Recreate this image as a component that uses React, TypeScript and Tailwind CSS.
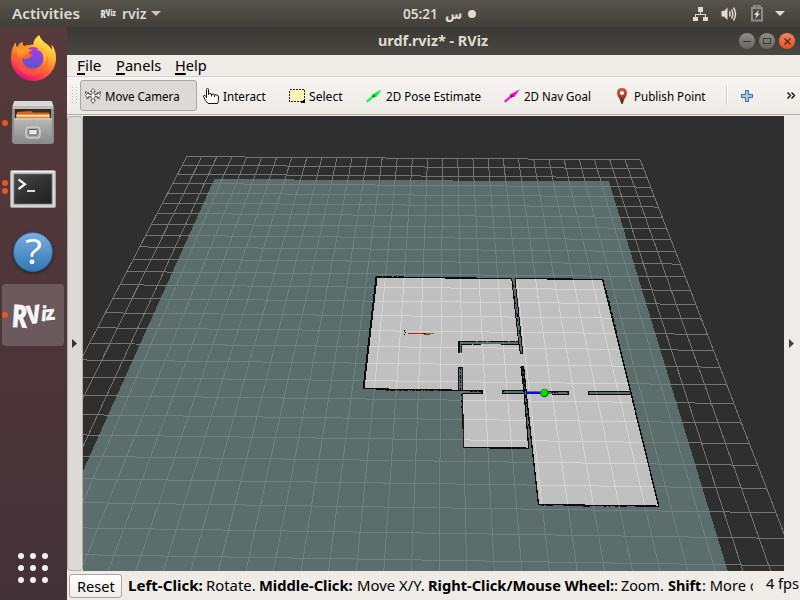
import { useLayoutEffect, useRef, useState } from "react";
import type { ReactNode } from "react";

/* Text run condensed or widened horizontally to a fixed measure. */
function Fit({ w, className = "", children }: { w: number; className?: string; children: ReactNode }) {
  const ref = useRef<HTMLSpanElement>(null);
  const [scale, setScale] = useState(1);
  useLayoutEffect(() => {
    if (ref.current) setScale(w / ref.current.offsetWidth);
  }, [w]);
  return (
    <span className={`inline-flex shrink-0 whitespace-pre ${className}`} style={{ width: w }}>
      <span ref={ref} className="inline-block origin-left" style={{ transform: `scaleX(${scale})` }}>
        {children}
      </span>
    </span>
  );
}

/* ---------- 3D view ---------- */

type Pt = [number, number];

/* Projective mapping of the unit square onto a quad: (0,0) (1,0) (1,1) (0,1). */
function project(q: Pt[]) {
  const [[x0, y0], [x1, y1], [x2, y2], [x3, y3]] = q;
  const dx1 = x1 - x2, dx2 = x3 - x2, sx = x0 - x1 + x2 - x3;
  const dy1 = y1 - y2, dy2 = y3 - y2, sy = y0 - y1 + y2 - y3;
  const det = dx1 * dy2 - dx2 * dy1;
  const g = (sx * dy2 - dx2 * sy) / det;
  const h = (dx1 * sy - sx * dy1) / det;
  const a = x1 - x0 + g * x1, b = x3 - x0 + h * x3;
  const d = y1 - y0 + g * y1, e = y3 - y0 + h * y3;
  return (u: number, v: number): Pt => {
    const w = g * u + h * v + 1;
    return [(a * u + b * v + x0) / w, (d * u + e * v + y0) / w];
  };
}

const at = project([[186.8, 156.6], [640.2, 159.8], [713.5, 350.4], [89.3, 343.5]]);

function gridPath() {
  let d = "";
  for (let i = 0; i <= 30; i++) {
    const a = at(i / 30, 0), b = at(i / 30, 28 / 16);
    d += `M${a[0].toFixed(2)} ${a[1].toFixed(2)}L${b[0].toFixed(2)} ${b[1].toFixed(2)}`;
  }
  for (let j = 0; j <= 28; j++) {
    const a = at(0, j / 16), b = at(1, j / 16);
    d += `M${a[0].toFixed(2)} ${a[1].toFixed(2)}L${b[0].toFixed(2)} ${b[1].toFixed(2)}`;
  }
  return d;
}

function Scene() {
  return (
    <svg width="701" height="455" viewBox="83 116 701 455" className="block bg-[#2f2f2f]" shapeRendering="crispEdges" fill="none">
      <path d={gridPath()} stroke="#747474" strokeWidth="1" />
      <g opacity="0.7">
        <path d="M214.3 179L609 181.5L728 572L37.5 572Z" fill="#6f8985" />
        <path d="M376.5 277L603 279L631.5 393L659 506L538.5 504.5L532 449L463.5 447L462.5 390L363.5 388.5Z" fill="#fefefe" />
        {/* wall bodies */}
        <g fill="#6f8985">
          <path d="M511.7 278L515 278L523 353L520 353L518.5 341Z" />
          <path d="M458 341H519.5V344H458Z" />
          <path d="M458 341H462V352H458Z" />
          <path d="M458 367H462V391H458Z" />
          <path d="M458 390H483V393.5H458Z" />
          <path d="M502 390.5H569V394H502Z" />
          <path d="M588 391.5H632V394.5H588Z" />
          <path d="M520.5 367H524L526.8 395L533 450H529L523.5 390Z" />
        </g>
        {/* scanned wall outlines */}
        <g stroke="#000">
          <path d="M376.5 277L363.5 388.5" strokeWidth="2" />
          <path d="M376 277.2L512 278.5M515 278.5L603 279.5" strokeWidth="1.3" />
          <path d="M376 276.3L404 276.6" strokeDasharray="6 1 9 2 3 1" />
          <path d="M470 278.8H512M575 279.8H603" />
          <path d="M602.7 279.5L631 393L658.7 506" strokeWidth="1.4" />
          <path d="M606 290L616.5 332M631.3 395L641 434" strokeDasharray="2 3 3 4" strokeWidth="1.4" />
          <path d="M659 506.2L538.5 504.5L532.5 451L526.6 396" strokeWidth="1.3" />
          <path d="M541 505.5L658 507" strokeDasharray="3 2 7 14 2 3 1 5" />
          <path d="M363 388.7L458 390.2" strokeWidth="1.2" />
          <path d="M386 390.3L452 391" strokeDasharray="3 1 5 2 1 1" />
          <path d="M511.7 278L518.5 341L520.3 353H522.5L521.8 343L515 279" />
          <path d="M513 285L520.5 340" strokeDasharray="2 3 1 5 4 2" />
          <path d="M457.5 341.5H519" strokeDasharray="18 2 5 1 2 2 1 1" />
          <path d="M462 344.5H520" strokeDasharray="10 1 8 20 20 1" />
          <path d="M459 341V352.5M461.5 344V352.5" strokeWidth="1.5" />
          <path d="M458.5 367V390M462 367V390" />
          <path d="M460.5 367V390" strokeDasharray="3 2 1 2 4 1" />
          <path d="M458 367.5H462" />
          <path d="M456 390.4H482.5V393.3H462" />
          <path d="M481.5 390V394" strokeWidth="2" />
          <path d="M470 391.5H483" strokeDasharray="3 1" />
          <path d="M526 390.7H502V393.8H525" />
          <path d="M502.7 390V394" strokeWidth="2" strokeDasharray="2 1" />
          <path d="M548 391.2H568.5V394.2H552" />
          <path d="M567.7 391V395M551 392H558" strokeWidth="2" strokeDasharray="2 1" />
          <path d="M631 391.8H588.5V394.4H631" />
          <path d="M520.6 367H523.7L526.5 395M521 367L524 391L528.7 448" strokeWidth="1.2" />
          <path d="M522.4 367L524.5 391" strokeWidth="2" strokeDasharray="5 1 3 2" />
          <path d="M526 395L529.5 428" strokeWidth="1.6" strokeDasharray="4 3 2 2" />
          <path d="M462.5 394L463.5 447" strokeWidth="1.3" />
          <path d="M461.5 394V412" strokeDasharray="2 4" />
          <path d="M463.5 447.2L500 447.5L529 448.3" strokeWidth="1.4" />
          <path d="M490 448.6H529" strokeDasharray="24 1" />
          <path d="M404.5 330V332M404.5 333.5V335M405.5 332V333" />
        </g>
      </g>
      <path d="M408 333.5H424" stroke="#dc1c00" />
      <path d="M423 333.5H426M424 334.5H427" stroke="#4a1a08" />
      <path d="M424 334.5H430" stroke="#e01800" />
      <path d="M426 333.5H434" stroke="#5a8a10" />
      <path d="M526 393H541" stroke="#0808f5" strokeWidth="2" />
      <g shapeRendering="auto">
        <circle cx="544.5" cy="393" r="4.3" fill="#087a08" />
        <circle cx="544.3" cy="392.6" r="3.4" fill="#07da0b" />
      </g>
    </svg>
  );
}

/* ---------- dock icons ---------- */

function Firefox() {
  return (
    <svg width="46" height="48" viewBox="10 34 46 48" className="-mt-0.5">
      <defs>
        <linearGradient id="fxBody" x1="0.8" y1="0.05" x2="0.35" y2="1">
          <stop offset="0" stopColor="#fff44f" />
          <stop offset="0.35" stopColor="#ffb22e" />
          <stop offset="0.62" stopColor="#ff6a35" />
          <stop offset="0.85" stopColor="#f9305a" />
          <stop offset="1" stopColor="#d80f7c" />
        </linearGradient>
        <linearGradient id="fxGlobe" x1="0.6" y1="0" x2="0.4" y2="1">
          <stop offset="0" stopColor="#b833e1" />
          <stop offset="0.5" stopColor="#7a4be0" />
          <stop offset="1" stopColor="#5a55c8" />
        </linearGradient>
        <linearGradient id="fxHead" x1="0" y1="0" x2="0.5" y2="1">
          <stop offset="0" stopColor="#ff8a2a" />
          <stop offset="0.6" stopColor="#ff9c22" />
          <stop offset="1" stopColor="#ff5b30" />
        </linearGradient>
      </defs>
      <path d="M39.3 35C35.5 37.2 33.5 41 33 45C29.5 44.5 26.5 45.4 24.3 46.6C23 45.5 22.3 43.8 22.2 42C19.5 43.2 18 45.5 17.3 47.6C16 46.2 15.6 44 15.7 42.3C13 45.5 11 51.5 11 58C11 71 21 81 33.3 81C46 81 56 71 56 57.5C56 52 54 47 51.3 44.2C51.9 46 52.2 48 52 49.6C48 43 41.5 42.5 39.3 35Z" fill="url(#fxBody)" />
      <circle cx="32.8" cy="57.8" r="10.8" fill="url(#fxGlobe)" />
      <path d="M33 45C30 44.4 26.5 45.3 24.3 46.6C23 45.5 22.3 43.8 22.2 42C18.5 44 17.2 48 17.1 50.5C16.8 55 19 57 22.7 58.6C27 60.3 31 57 32.7 55.4C33.4 54 31.2 54 28.8 53.7C28.6 52 31 51 33 50.3C32 49.5 29 49.2 28 49.3C29.3 47.3 31 46 33 45Z" fill="url(#fxHead)" />
      <path d="M36 49.3C42 50.5 44.8 56 43.4 61.2C47 57 46.8 51 42.4 47.6Z" fill="#ffb434" />
      <path d="M17.1 50C15 63 25 71.5 34.5 70.5C44 69.7 48.3 61 47 54C51 65 43.5 75 33 75.3C22 75.6 14 67 17.1 50Z" fill="#ff6238" opacity="0.55" />
    </svg>
  );
}

function Files() {
  return (
    <svg width="46" height="46" viewBox="10 100 46 46">
      <defs>
        <linearGradient id="fl" x1="0" y1="0" x2="0" y2="1">
          <stop offset="0" stopColor="#b9b9b7" />
          <stop offset="1" stopColor="#898987" />
        </linearGradient>
      </defs>
      <path d="M14 101H52L54 107V141Q54 144 51 144H15Q12 144 12 141V107Z" fill="#8d8d8b" />
      <path d="M14.5 101H51.5L53.5 106.5H12.5Z" fill="#d9d9d7" />
      <path d="M13 106.5H53V109H13Z" fill="#bdbdbb" />
      <path d="M15 109H51V120H15Z" fill="#3a2a1e" />
      <path d="M17 112L31 111L33 112.5H49V119H17Z" fill="#d2691e" />
      <path d="M16 114H50V120H16Z" fill="#e88a33" />
      <path d="M17 115H49V116.5H17Z" fill="#fbe9c8" />
      <path d="M14 118.5H52V143.5H14Z" fill="url(#fl)" />
      <path d="M14 118.5H52V119.5H14Z" fill="#d8d8d6" />
      <rect x="26" y="127" width="14" height="11" rx="2.5" fill="#a9a9a7" stroke="#e0e0de" />
      <rect x="28.7" y="129.5" width="8.6" height="5.5" rx="1" fill="#e8e8e6" stroke="#555" />
    </svg>
  );
}

function Terminal() {
  return (
    <svg width="46" height="40" viewBox="10 169 46 40">
      <defs>
        <linearGradient id="tm" x1="0" y1="0" x2="1" y2="1">
          <stop offset="0" stopColor="#4b4b4b" />
          <stop offset="0.5" stopColor="#323232" />
          <stop offset="1" stopColor="#202020" />
        </linearGradient>
      </defs>
      <rect x="10.5" y="170.5" width="45" height="37" rx="1.5" fill="#d4d4d2" stroke="#a5a4a2" />
      <path d="M11.5 171.5H54.5" stroke="#f6f6f6" />
      <rect x="14" y="174" width="38" height="30" fill="url(#tm)" stroke="#777" strokeWidth="0.8" />
      <path d="M18.5 179.5L25 184.2L18.5 189" fill="none" stroke="#f3f3f3" strokeWidth="2.2" />
      <path d="M27 191H35" stroke="#f3f3f3" strokeWidth="1.8" />
    </svg>
  );
}

function Help() {
  return (
    <div className="flex h-10 w-10 items-center justify-center rounded-full border border-[#28659f] bg-linear-to-b from-[#78aee0] to-[#2f79b4] font-['Open_Sans',sans-serif] text-[34px] leading-none font-medium text-white shadow-[0_1px_3px_rgba(0,0,0,.5)]">
      <span className="-mt-0.5 scale-x-115">?</span>
    </div>
  );
}

function RvizLogo() {
  return (
    <svg width="50" height="36" viewBox="0 0 50 36" className="overflow-visible">
      {[1, 0].map((s) => (
        <g key={s} transform={`translate(${s} ${s})`} fill={s ? "#5e5557" : "#f4f4f4"} fontFamily="'Open Sans', sans-serif" fontWeight="800">
          <text transform="translate(3 30) rotate(4) scale(.74 1)" fontSize="32">R</text>
          <text transform="translate(19.5 27.5) rotate(-7) scale(.8 1)" fontSize="26">V</text>
          <text transform="translate(32.5 24) rotate(5) scale(.85 1)" fontSize="21">i</text>
          <text transform="translate(37.5 23.5) rotate(-5) scale(1 1)" fontSize="20">z</text>
        </g>
      ))}
    </svg>
  );
}

function DockItem({ dots = 0, active = false, children }: { dots?: number; active?: boolean; children: ReactNode }) {
  return (
    <div className={`relative flex h-[62px] w-[62px] items-center justify-center rounded-[4px] ${active ? "bg-[#6c595e]" : ""}`}>
      {children}
      <div className="absolute inset-y-0 left-0 flex flex-col items-center justify-center gap-[2px]">
        {Array.from({ length: dots }, (_, i) => (
          <span key={i} className="h-1.5 w-1.5 rounded-full bg-[#e95420]" />
        ))}
      </div>
    </div>
  );
}

/* ---------- toolbar ---------- */

function ArrowIcon({ color, dark }: { color: string; dark: string }) {
  return (
    <svg width="16" height="16" viewBox="0 0 16 16" className="-ml-px">
      <path d="M0 13L6 8L5.500 6.700L15.800 1.200L10 9.500L8.500 8.800L1.500 14.500Z" fill={color} />
      <path d="M6 8.200L8.500 6.500L9.500 8L7.500 9.500Z" fill={dark} />
    </svg>
  );
}

const icons = {
  move: (
    <svg width="16" height="16" viewBox="0 0 16 16" fill="#f4f4f4" stroke="#4a4a4a" strokeWidth="0.8">
      <path d="M8 .5L10.5 3.5H9V6L10 6.5L12.5 6V4.5L15.6 7.5L13 10.5V9L10 8.5L9 10V12H10.5L8 15.5L5.5 12H7V10L6 8.5L3 9V10.5L.4 7.5L3.5 4.5V6L6 6.5L7 6V3.5H5.500Z" />
      <path d="M.5 3.500L6 7M15.500 3.500L10 7M1 11L6 8M15 11L10 8M.5 3.500V6M15.500 3.500V6" />
    </svg>
  ),
  hand: (
    <svg width="16" height="16" viewBox="0 0 16 16" fill="#fff" stroke="#111" strokeWidth="1">
      <path d="M3.500 10V1.500Q3.500 .5 4.500 .5Q5.500 .5 5.500 1.500V6.500Q6 5.500 7 5.500Q8.500 5.500 8.500 7Q9 6 10 6Q11.500 6 11.500 7.500Q12 6.500 13 6.800Q15.500 7 15.500 9V12.500L14.500 15.500H5L2.500 12.500L.5 8.500Q0.500 7 2 7.500L3.500 9" />
      <path d="M8.500 6V8.500M11.500 7V9" />
    </svg>
  ),
  select: (
    <svg width="16" height="14" viewBox="0 0 16 14" shapeRendering="crispEdges">
      <rect x="0.5" y="0.5" width="15" height="12" fill="#fbf3b4" stroke="#222" strokeDasharray="2 1" />
      <path d="M12 13.500L16 10V14H12Z" fill="#000" />
    </svg>
  ),
  pose: <ArrowIcon color="#0bf53a" dark="#087a20" />,
  nav: <ArrowIcon color="#f80ace" dark="#7a0868" />,
  pin: (
    <svg width="16" height="16" viewBox="0 0 16 16">
      <defs>
        <linearGradient id="pin" x1="0" y1="0" x2="0" y2="1">
          <stop offset="0" stopColor="#dd5339" />
          <stop offset="0.5" stopColor="#ad4028" />
          <stop offset="1" stopColor="#33241c" />
        </linearGradient>
      </defs>
      <path d="M8 0Q13 0 13 5Q13 8 10.500 11L8.500 16H7.500L5.500 11Q3 8 3 5Q3 0 8 0Z" fill="url(#pin)" />
      <circle cx="8" cy="5" r="2" fill="#fff" />
    </svg>
  ),
};

function Tool({ icon, label, w, className }: { icon: ReactNode; label: string; w: number; className: string }) {
  return (
    <div className={`flex h-[31px] shrink-0 items-center ${className}`}>
      <div className="flex w-4 shrink-0 justify-center">{icon}</div>
      <Fit w={w} className="mt-0.5 ml-1 text-[13px]">{label}</Fit>
    </div>
  );
}

function MenuLabel({ first, rest, w }: { first: string; rest: string; w: number }) {
  return (
    <Fit w={w} className="text-[15px] leading-[21px]">
      <span className="underline decoration-black decoration-[1.5px] underline-offset-[2px] [text-decoration-skip-ink:none]">{first}</span>
      {rest}
    </Fit>
  );
}

export default function App() {
  return (
    <div className="flex h-[600px] w-[800px] flex-col overflow-hidden bg-[#efebe7] font-['Noto_Sans','Open_Sans',sans-serif] text-black">
      {/* system bar */}
      <header className="flex h-[27px] shrink-0 items-center bg-linear-to-b from-[#57544c] to-[#413f39] pl-3 text-[14px] font-semibold text-[#dfdbd2]">
        <Fit w={67.5}>Activities</Fit>
        <svg width="17" height="12" viewBox="0 0 17 12" className="-mt-0.5 ml-[20.5px] overflow-visible" fill="#e5e2dc" fontFamily="'Open Sans', sans-serif" fontWeight="800">
          <text transform="translate(0.500 10.500) scale(.72 1)" fontSize="11">R</text>
          <text transform="translate(6 9.500) rotate(-5) scale(.7 1)" fontSize="10">V</text>
          <text transform="translate(10.500 8.500) scale(.8 1)" fontSize="8">iz</text>
        </svg>
        <Fit w={24} className="ml-[5px]">rviz</Fit>
        <svg width="10" height="5" className="ml-[5px]" fill="#c9c6be"><path d="M0 0H10L5 5Z" /></svg>
        <Fit w={35} className="ml-[242px]">05:21</Fit>
        <Fit w={17} className="ml-[7px] font-['DejaVu_Sans',sans-serif] leading-5">س</Fit>
        <span className="ml-[6px] h-2 w-2 rounded-full bg-[#dfdbd2]" />
        <svg width="16" height="16" viewBox="0 0 16 16" className="ml-[217px]" fill="#dfdbd2" shapeRendering="crispEdges">
          <path d="M5 1H10V6H5ZM0 11H5V15H0ZM10 11H15V15H10ZM7 6H8V8H13V11H12V9H3V11H2V8H7Z" />
        </svg>
        <svg width="17" height="16" viewBox="0 0 17 16" className="ml-[12px]" fill="none" stroke="#dfdbd2" strokeWidth="1.5">
          <path d="M0.500 5H3L6.500 1.500V14L3 10.500H0.500Z" fill="#dfdbd2" stroke="none" />
          <path d="M8.500 5.500Q10 8 8.500 10.500M10.500 3.500Q13 8 10.500 12.500" />
          <path d="M12.500 1.500Q16.500 8 12.500 14.500" />
        </svg>
        <svg width="12" height="17" viewBox="0 0 12 17" className="ml-[13px]" fill="none">
          <path d="M3 2V.5H9V2M1 3H11V15.500H1Z" stroke="#8f8d87" strokeWidth="2" />
          <path d="M8 4.500L3 10H5.500L4 14L9 8.500H6.500Z" fill="#e5e2dc" />
        </svg>
        <svg width="10" height="5" className="ml-[12px]" fill="#dfdbd2"><path d="M0 0H10L5 5Z" /></svg>
      </header>

      <div className="flex min-h-0 flex-1">
        {/* dock */}
        <nav className="flex w-[67px] shrink-0 flex-col items-start gap-0.5 bg-linear-to-b from-[#573a3b] to-[#433138] pt-px pl-0.5">
          <DockItem><Firefox /></DockItem>
          <DockItem dots={1}><Files /></DockItem>
          <DockItem dots={2}><div className="mt-1"><Terminal /></div></DockItem>
          <DockItem><div className="mt-0.5"><Help /></div></DockItem>
          <DockItem dots={1} active><RvizLogo /></DockItem>
          <div className="mt-auto mb-[17px] ml-4 grid grid-cols-3 gap-1.5">
            {Array.from({ length: 9 }, (_, i) => (
              <span key={i} className="h-1.5 w-1.5 rounded-full bg-[#f2f1f0]" />
            ))}
          </div>
        </nav>

        <main className="flex min-w-0 flex-1 flex-col">
          {/* window title */}
          <div className="flex h-7 shrink-0 items-center bg-linear-to-b from-[#393834] to-[#4a4842] pl-[311px] text-[14px] font-bold text-[#dfdbd2]">
            <Fit w={110} className="-mt-0.5">urdf.rviz* - RViz</Fit>
            <div className="ml-[251px] flex gap-1">
              <span className="flex h-4 w-4 items-center justify-center rounded-full bg-linear-to-b from-[#8f8d87] to-[#666560]"><span className="h-px w-2 bg-[#3a3935]" /></span>
              <span className="flex h-4 w-4 items-center justify-center rounded-full bg-linear-to-b from-[#8f8d87] to-[#666560]"><span className="h-[6px] w-2 border border-[#3a3935]" /></span>
              <span className="flex h-4 w-4 items-center justify-center rounded-full bg-linear-to-b from-[#f4825e] to-[#e3501f]">
                <svg width="7" height="7" viewBox="0 0 7 7" stroke="#4a2a1c" strokeWidth="1.200"><path d="M0.500 0.500L6.500 6.500M6.500 0.500L0.500 6.500" /></svg>
              </span>
            </div>
          </div>

          {/* menu */}
          <div className="flex h-[22px] shrink-0 border-b border-[#d5d1cd] bg-[#efebe7] pl-[10px]">
            <MenuLabel first="F" rest="ile" w={24.5} />
            <div className="w-[14.5px]" />
            <MenuLabel first="P" rest="anels" w={45} />
            <div className="w-[14px]" />
            <MenuLabel first="H" rest="elp" w={32} />
          </div>

          {/* toolbar */}
          <div className="flex h-[38px] shrink-0 items-center border-b border-[#b5b1ad] bg-linear-to-b from-[#f7f4f1] to-[#edeae6] pl-[5px]">
            <svg width="5" height="18" shapeRendering="crispEdges" stroke="#c2beba"><path d="M.5 0V18M4.500 0V18" strokeDasharray="1 2" /></svg>
            <Tool icon={icons.move} label="Move Camera" w={74.5} className="ml-[3px] w-[117px] rounded-[3px] border border-[#aaa6a3] bg-[#dcd9d6] pl-1" />
            <Tool icon={icons.hand} label="Interact" w={43} className="w-[86px] pl-[6px]" />
            <Tool icon={icons.select} label="Select" w={33.5} className="w-[77px] pl-[6px]" />
            <Tool icon={icons.pose} label="2D Pose Estimate" w={95} className="w-[138px] pl-[6px]" />
            <Tool icon={icons.nav} label="2D Nav Goal" w={66.5} className="w-[110px] pl-[6px]" />
            <Tool icon={icons.pin} label="Publish Point" w={71.5} className="w-[118px] pl-[6px]" />
            <span className="h-[19px] w-0.5 border-r border-l border-r-white border-l-[#cfcbc7]" />
            <svg width="12" height="12" viewBox="0 0 12 12" className="ml-[13px]">
              <path d="M4.500 .5H7.500V4.500H11.500V7.500H7.500V11.500H4.500V7.500H.5V4.500H4.500Z" fill="#a9c8ea" stroke="#3467a4" />
            </svg>
            <svg width="8" height="7" viewBox="0 0 8 7" className="ml-[34px]" fill="none" stroke="#000" strokeWidth="1.300"><path d="M.5 .5L3.500 3.500L.5 6.500M4.500 .5L7.500 3.500L4.500 6.500" /></svg>
          </div>

          {/* render panel */}
          <div className="flex h-[456px] shrink-0 pt-px">
            <div className="flex w-4 shrink-0 items-center rounded-[3px] border border-[#b2aeaa] bg-[#dcd9d6] pl-1">
              <svg width="5" height="9" fill="#333"><path d="M0 0L5 4.500L0 9Z" /></svg>
            </div>
            <Scene />
            <div className="flex w-4 items-center pl-[5px]">
              <svg width="5" height="9" fill="#444"><path d="M0 0L5 4.500L0 9Z" /></svg>
            </div>
          </div>

          {/* status */}
          <div className="flex flex-1 items-start pl-0.5 text-[15px] leading-[20px]">
            <button className="mt-[3px] flex h-6 w-[53px] items-center justify-center rounded-[3px] border border-[#aaa6a3] bg-linear-to-b from-white to-[#efecea]">
              <Fit w={38}>Reset</Fit>
            </button>
            <div className="mt-1 ml-[6px] flex w-[625px] overflow-hidden">
              <Fit w={74.5} className="font-bold">Left-Click:</Fit>
              <Fit w={49.5} className="ml-[3px]">Rotate.</Fit>
              <Fit w={94} className="ml-1 font-bold">Middle-Click:</Fit>
              <Fit w={67.500} className="ml-1">Move X/Y.</Fit>
              <Fit w={186} className="ml-[3.5px] font-bold">Right-Click/Mouse Wheel:</Fit>
              <Fit w={4}>:</Fit>
              <Fit w={43} className="ml-[3px]">Zoom.</Fit>
              <Fit w={33.5} className="ml-[4px] font-bold">Shift</Fit>
              <Fit w={48}>: More </Fit>
              <Fit w={8}>o</Fit>
            </div>
            <Fit w={33} className="mt-0.5 ml-[13px]">4 fps</Fit>
          </div>
        </main>
      </div>
    </div>
  );
}
